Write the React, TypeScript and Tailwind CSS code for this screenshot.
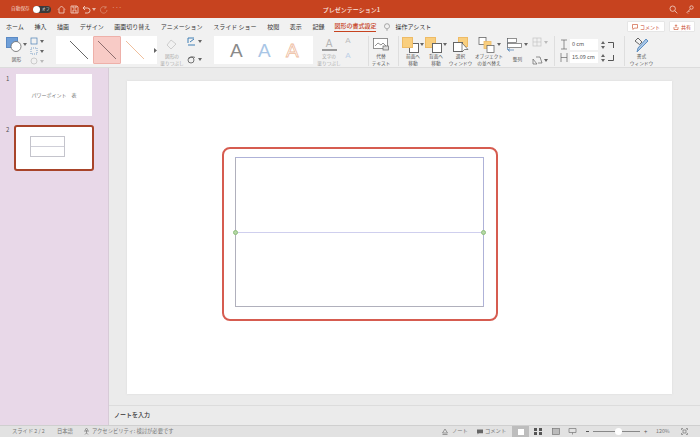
import {ReactNode} from 'react';

const font = {fontFamily: '"Noto Sans CJK JP", "Liberation Sans", sans-serif'};

const tabs = ['ホーム', '挿入', '描画', 'デザイン', '画面切り替え', 'アニメーション', 'スライド ショー', '校閲', '表示', '記録'];

function Caret({color = '#666'}: {color?: string}) {
  return (
    <svg width="4" height="3" viewBox="0 0 4 3" className="shrink-0">
      <path d="M0 0h4L2 3z" fill={color} />
    </svg>
  );
}

function Tool({icon, children, width, muted}: {icon: ReactNode; children: ReactNode; width: number; muted?: boolean}) {
  return (
    <div style={{width}} className="shrink-0 flex flex-col items-center">
      <div className="h-[17px] flex items-center justify-center gap-[1px]">{icon}</div>
      <div
        className={`h-[13px] flex items-center text-center text-[4.7px] leading-[6.5px] whitespace-nowrap ${muted ? 'text-[#a8a8a8]' : 'text-[#555]'}`}>
        <div>{children}</div>
      </div>
    </div>
  );
}

function Squares({back}: {back?: boolean}) {
  const yellow = <rect x="0.5" y="0.5" width="10" height="10" fill="#f9cf7f" stroke="#eebb66" />;
  const white = <rect x="7.5" y="6.5" width="9" height="9" fill="#fff" stroke="#666" />;
  return (
    <svg width="17" height="16" viewBox="0 0 17 16">
      {back ? yellow : white}
      {back ? white : yellow}
    </svg>
  );
}

function TitleBar() {
  return (
    <div className="h-[18px] bg-[#c7431f] flex items-center text-white shrink-0">
      <span className="ml-[11px] text-[4.7px] text-[#f4d6cb]">自動保存</span>
      <div className="ml-[3px] w-[18px] h-[7px] rounded-full bg-[#3a3a3a] flex items-center">
        <div className="w-[7px] h-[7px] rounded-full bg-white" />
        <span className="ml-[2px] text-[4px] text-[#ddd]">オフ</span>
      </div>
      <svg className="ml-[6px]" width="9" height="9" viewBox="0 0 9 9" fill="none" stroke="#f4d6cb" strokeWidth="0.8">
        <path d="M1 4.500 4.500 1 8 4.500M2 4v4h5V4" />
      </svg>
      <svg className="ml-[4px]" width="9" height="9" viewBox="0 0 9 9" fill="none" stroke="#f4d6cb" strokeWidth="0.8">
        <path d="M1 1h6l1 1v6H1zM3 1v2h3V1M3 8V5h3v3" />
      </svg>
      <svg className="ml-[3px]" width="9" height="9" viewBox="0 0 9 9" fill="none" stroke="#f4d6cb" strokeWidth="0.9">
        <path d="M1 3h4.500a2 2 0 0 1 0 5H3M1 3l2-2M1 3l2 2" />
      </svg>
      <div className="ml-[1px]">
        <Caret color="#e8b5a3" />
      </div>
      <svg className="ml-[3px]" width="9" height="9" viewBox="0 0 9 9" fill="none" stroke="#d98a70" strokeWidth="0.8">
        <path d="M7 2.500A3.300 3.300 0 1 0 8 5M7 1v2H5" />
      </svg>
      <span className="ml-[4px] w-[8px] text-[6px] leading-none text-[#f4d6cb] -mt-[2px]">···</span>
      <span className="ml-[203px] text-[6px] font-medium text-[#fbe9e2] whitespace-nowrap">プレゼンテーション1</span>
      <svg className="ml-auto" width="9" height="9" viewBox="0 0 9 9" fill="none" stroke="#f4d6cb" strokeWidth="0.8">
        <circle cx="3.700" cy="3.700" r="2.700" />
        <path d="M5.800 5.800 8.300 8.300" />
      </svg>
      <svg className="ml-[8px] mr-[6px]" width="8" height="9" viewBox="0 0 8 9" fill="none" stroke="#f4d6cb" strokeWidth="0.8">
        <circle cx="5.500" cy="2.500" r="1.700" />
        <path d="M4.300 4 1 7.500 2 8.500M2.500 6l1 1" />
      </svg>
    </div>
  );
}

function TabRow() {
  return (
    <div className="h-[17px] bg-[#f1f1f1] flex items-center shrink-0 text-[6px] text-[#333]">
      <div className="ml-[6px] flex gap-[10.6px] whitespace-nowrap">
        {tabs.map(name => (
          <span key={name}>{name}</span>
        ))}
      </div>
      <span className="ml-[10px] h-[11px] leading-[10px] text-[#c7431f] font-medium border-b border-[#c7431f] whitespace-nowrap">
        図形の書式設定
      </span>
      <svg className="ml-[8px]" width="6" height="8" viewBox="0 0 7 9" fill="none" stroke="#777" strokeWidth="0.7">
        <path d="M2.300 6.500C1 5.500.6 4.500.6 3.500a2.900 2.900 0 0 1 5.800 0c0 1-.4 2-1.700 3zM2.500 8h2" />
      </svg>
      <span className="ml-[5px] whitespace-nowrap">操作アシスト</span>
      <div className="ml-auto h-[11px] w-[38px] bg-white rounded-[1px] flex items-center justify-center gap-[2px] text-[5px] text-[#c7431f] border border-[#e6e6e6]">
        <svg width="6" height="6" viewBox="0 0 6 6" fill="none" stroke="#c7431f" strokeWidth="0.6">
          <path d="M.5.500h5v3.600H2.200L1 5.500V4.100H.5z" />
        </svg>
        コメント
      </div>
      <div className="ml-[4px] mr-[5px] h-[11px] w-[26px] bg-white rounded-[1px] flex items-center justify-center gap-[2px] text-[5px] text-[#c7431f] border border-[#e6e6e6]">
        <svg width="6" height="6" viewBox="0 0 6 6" fill="none" stroke="#c7431f" strokeWidth="0.6">
          <path d="M1 3v2.500h4V3M3 4V.8M1.800 2 3 .8 4.200 2" />
        </svg>
        共有
      </div>
    </div>
  );
}

function Line({color, selected}: {color: string; selected?: boolean}) {
  return (
    <div className={`w-[28px] h-[28px] shrink-0 flex items-center justify-center ${selected ? 'bg-[#f8cbc6] border border-[#eeb0a9] rounded-[1px]' : ''}`}>
      <svg width="20" height="20" viewBox="0 0 20 20" className="shrink-0">
        <path d="M1 1 19 19" stroke={color} strokeWidth="1" />
      </svg>
    </div>
  );
}

function BigA({color, outline, width}: {color: string; outline?: boolean; width: number}) {
  return (
    <span
      style={outline ? {width, WebkitTextStroke: `0.8px ${color}`, color: '#fff'} : {width, color}}
      className="shrink-0 text-[19px] leading-none font-['Liberation_Sans']">
      A
    </span>
  );
}

function Ribbon() {
  return (
    <div className="h-[33px] bg-[#f1f1f1] border-b border-[#dcdcdc] flex items-start shrink-0 pt-[1px]">
      <div className="ml-[5px]">
        <Tool
          width={23}
          icon={
            <>
              <svg width="16" height="15" viewBox="0 0 16 15">
                <rect x="0.500" y="0.500" width="11" height="10" fill="#6f9fd8" stroke="#5b8ac4" />
                <circle cx="10" cy="9.500" r="5" fill="#fff" stroke="#666" strokeWidth="0.8" />
              </svg>
              <Caret />
            </>
          }>
          図形
        </Tool>
      </div>
      <div className="ml-[2px] w-[16px] flex flex-col gap-[2px] pt-[1px] shrink-0">
        {['#4a7fb5', '#4a7fb5', '#bbb'].map((c, i) => (
          <div key={i} className="flex items-center gap-[2px]">
            <svg width="8" height="8" viewBox="0 0 8 8" fill="none" stroke={c} strokeWidth="0.7">
              {i === 2 ? <circle cx="4" cy="4" r="3" /> : <rect x="1" y="1" width="6" height="6" strokeDasharray={i === 1 ? '1 1' : undefined} />}
            </svg>
            <Caret color={i === 2 ? '#bbb' : '#666'} />
          </div>
        ))}
      </div>
      <div className="ml-[10px] w-[101px] h-[28px] bg-white flex items-center shrink-0">
        <div className="w-[9px] shrink-0" />
        <Line color="#666" />
        <Line color="#8d6d6d" selected />
        <Line color="#efbf9c" />
        <svg className="ml-[5px] shrink-0" width="3" height="5" viewBox="0 0 3 5">
          <path d="M0 0 3 2.500 0 5z" fill="#666" />
        </svg>
      </div>
      <div className="ml-[3px]">
        <Tool
          width={24}
          muted
          icon={
            <svg width="12" height="12" viewBox="0 0 12 12" fill="none" stroke="#c4c4c4" strokeWidth="0.8">
              <path d="M5 1 1 6l4 4 5-5z" />
            </svg>
          }>
          図形の
          <br />
          塗りつぶし
        </Tool>
      </div>
      <div className="ml-[3px] w-[20px] flex flex-col gap-[9px] pt-[1px] shrink-0">
        <div className="flex items-center gap-[2px]">
          <svg width="9" height="9" viewBox="0 0 9 9" fill="none" stroke="#3f7fb5" strokeWidth="1">
            <path d="M1 8h7M1 6V1h6M3 5l4-3" />
          </svg>
          <Caret />
        </div>
        <div className="flex items-center gap-[2px]">
          <svg width="9" height="9" viewBox="0 0 9 9" fill="none" stroke="#555" strokeWidth="0.8">
            <circle cx="4" cy="5" r="3" />
            <path d="M2 3.500c2-2 4-2 6-1" />
          </svg>
          <Caret />
        </div>
      </div>
      <div className="ml-[7px] w-[99px] h-[28px] bg-white flex items-center pl-[16px] shrink-0">
        <BigA color="#8a8a8a" width={28} />
        <BigA color="#a9c6e6" width={28} />
        <BigA color="#eebd9f" outline width={14} />
      </div>
      <div className="ml-[5px]">
        <Tool
          width={22}
          muted
          icon={
            <div className="flex flex-col items-center">
              <span className="text-[10px] leading-[10px] text-[#b5b5b5] font-['Liberation_Sans']">A</span>
              <div className="w-[15px] h-[2px] bg-[#9a9a9a]" />
            </div>
          }>
          文字の
          <br />
          塗りつぶし
        </Tool>
      </div>
      <div className="ml-[4px] w-[8px] flex flex-col items-center gap-[5px] text-[8px] leading-[10px] font-['Liberation_Sans'] shrink-0">
        <span className="text-[#bdbdbd]">A</span>
        <span className="text-[#bcd0e8]">A</span>
      </div>
      <div className="ml-[16px] w-px h-[30px] bg-[#dedede] shrink-0" />
      <div className="ml-[2px]">
        <Tool
          width={20}
          icon={
            <svg width="16" height="13" viewBox="0 0 16 13" fill="none" stroke="#666" strokeWidth="0.7">
              <rect x="0.500" y="0.500" width="14" height="10" fill="#fff" />
              <path d="M2 8l3-3 3 2 2-2 3 3" />
              <rect x="10" y="8" width="5.500" height="4" fill="#ddd" />
            </svg>
          }>
          代替
          <br />
          テキスト
        </Tool>
      </div>
      <div className="ml-[7px] w-px h-[30px] bg-[#dedede] shrink-0" />
      <div className="ml-[3px]">
        <Tool
          width={22}
          icon={
            <>
              <Squares />
              <Caret />
            </>
          }>
          前面へ
          <br />
          移動
        </Tool>
      </div>
      <Tool
        width={24}
        icon={
          <>
            <Squares back />
            <Caret />
          </>
        }>
        背面へ
        <br />
        移動
      </Tool>
      <Tool
        width={25}
        icon={
          <svg width="16" height="16" viewBox="0 0 16 16">
            <rect x="5.500" y="0.500" width="9" height="9" fill="#f9cf7f" stroke="#eebb66" />
            <rect x="0.500" y="5.500" width="9" height="9" fill="#fff" stroke="#666" />
            <path d="M9 6v9l2.500-2.500H15z" fill="#fff" stroke="#555" strokeWidth="0.7" />
          </svg>
        }>
        選択
        <br />
        ウィンドウ
      </Tool>
      <div className="ml-[1px]">
        <Tool
          width={30}
          icon={
            <>
              <svg width="18" height="16" viewBox="0 0 18 16">
                <rect x="1" y="0.500" width="7" height="7" fill="#fff" stroke="#666" strokeWidth="0.8" />
                <rect x="6" y="4.500" width="7" height="7" fill="#f9cf7f" stroke="#eebb66" strokeWidth="0.8" />
                <rect x="9" y="8.500" width="7" height="7" fill="#fff" stroke="#666" strokeWidth="0.8" />
              </svg>
              <Caret />
            </>
          }>
          オブジェクト
          <br />
          の並べ替え
        </Tool>
      </div>
      <div className="ml-[2px]">
        <Tool
          width={23}
          icon={
            <>
              <svg width="16" height="16" viewBox="0 0 16 16" fill="none" stroke="#666" strokeWidth="0.7">
                <path d="M.5 1v12" stroke="#4a7fb5" />
                <rect x="0.500" y="1.500" width="9" height="4" fill="#fff" />
                <rect x="0.500" y="6.500" width="14" height="4" fill="#fff" />
                <path d="M7 13H1M3 11.500 1 13l2 1.500" stroke="#4a7fb5" />
              </svg>
              <Caret />
            </>
          }>
          整列
        </Tool>
      </div>
      <div className="ml-[3px] w-[18px] flex flex-col gap-[8px] pt-[1px] shrink-0">
        <div className="flex items-center gap-[1px]">
          <svg width="11" height="10" viewBox="0 0 11 10" fill="none" stroke="#c4c4c4" strokeWidth="0.7">
            <rect x="1" y="1" width="8" height="8" />
            <path d="M5 1v8M1 5h8" />
          </svg>
          <Caret color="#bbb" />
        </div>
        <div className="flex items-center gap-[1px]">
          <svg width="11" height="10" viewBox="0 0 11 10" fill="none" stroke="#666" strokeWidth="0.7">
            <path d="M1 9V4l4 5zM4 2h4l2 6H6" />
          </svg>
          <Caret />
        </div>
      </div>
      <div className="ml-[4px] w-px h-[30px] bg-[#dedede] shrink-0" />
      <div className="ml-[5px] w-[56px] flex flex-col gap-[2px] pt-[3px] shrink-0">
        {[
          ['0 cm', 'M1 1h6M1 10h6M4 1v9'],
          ['15.09 cm', 'M1 1v9M7 1v9M1 5.500h6'],
        ].map(([value, d]) => (
          <div key={value} className="flex items-center h-[11px]">
            <svg className="shrink-0" width="8" height="11" viewBox="0 0 8 11" fill="none" stroke="#666" strokeWidth="0.7">
              <path d={d} />
            </svg>
            <div className="ml-[2px] w-[28px] h-[11px] bg-white text-[5.5px] leading-[11px] pl-[2px] text-[#555] whitespace-nowrap overflow-hidden">{value}</div>
            <svg className="ml-[3px] shrink-0" width="4" height="8" viewBox="0 0 4 8">
              <path d="M2 0 4 3H0zM2 8 0 5h4z" fill="#666" />
            </svg>
            <svg className="ml-[3px] shrink-0" width="6" height="6" viewBox="0 0 6 6" fill="none" stroke="#555" strokeWidth="1">
              <path d={value === '0 cm' ? 'M0 .5h5.500V6' : 'M0 5.500h5.500V0'} />
            </svg>
          </div>
        ))}
      </div>
      <div className="ml-[8px] w-px h-[30px] bg-[#dedede] shrink-0" />
      <div className="ml-[4px]">
        <Tool
          width={25}
          icon={
            <svg width="16" height="16" viewBox="0 0 16 16" fill="none" strokeWidth="1">
              <path d="M4 1 8 5 5.500 7.500 1 4z" stroke="#666" />
              <path d="M14 4 6 12l-3 3 1-4 8-9z" fill="#a9c6e6" stroke="#5f90c2" />
            </svg>
          }>
          書式
          <br />
          ウィンドウ
        </Tool>
      </div>
    </div>
  );
}

function Sidebar() {
  return (
    <div className="w-[109px] shrink-0 bg-[#e8d8e8] border-r border-[#d7cbd7] pt-[6px] text-[#555] text-[6px]">
      <div className="flex">
        <span className="ml-[6px] w-[10px]">1</span>
        <div className="w-[76px] h-[42px] bg-white flex items-center justify-center text-[5px] text-[#777] whitespace-pre">
          パワーポイント　表
        </div>
      </div>
      <div className="flex mt-[9px]">
        <span className="ml-[6px] w-[8px]">2</span>
        <div className="w-[80px] h-[46px] bg-white border-2 border-[#a8442a] rounded-[3px] pt-[9px] pl-[14px]">
          <div className="w-[35px] h-[21px] border border-[#c4c4cc] flex flex-col justify-center">
            <div className="h-px bg-[#cfcfd8]" />
          </div>
        </div>
      </div>
    </div>
  );
}

function Handle({className}: {className: string}) {
  return <div className={`absolute w-[5px] h-[5px] rounded-full bg-[#b5d8a5] border border-[#8fbf7d] ${className}`} />;
}

function Canvas() {
  return (
    <div className="flex-1 flex flex-col min-w-0 bg-[#ebebeb]">
      <div className="flex-1 pl-[18px] pt-[13px]">
        <div className="w-[545px] h-[313px] bg-white shadow-[0_0_2px_#d8d8d8] pl-[95px] pt-[66px]">
          <div className="w-[276px] h-[174px] border-2 border-[#d65c50] rounded-[8px] pl-[11px] pt-[8px]">
            <div className="relative w-[249px] h-[150px] border border-[#b0b0bc] border-t-[#aeb2d8] border-r-[#aeb2d8] flex flex-col justify-center">
              <div className="h-px bg-[#cfcfee]" />
              <Handle className="left-[-3px] top-[72px]" />
              <Handle className="right-[-3px] top-[72px]" />
            </div>
          </div>
        </div>
      </div>
      <div className="h-[20px] border-t border-[#dcdcdc] pl-[5px] text-[6px] leading-[17px] font-medium text-[#333] shrink-0">ノートを入力</div>
    </div>
  );
}

function StatusBar() {
  return (
    <div className="h-[12px] bg-[#e2e2e2] border-t border-[#cfcfcf] flex items-center text-[5.3px] text-[#777] shrink-0 whitespace-nowrap">
      <span className="ml-[12px] w-[35px]">スライド 2 / 2</span>
      <span className="ml-[10px] w-[15px]">日本語</span>
      <svg className="ml-[11px]" width="7" height="7" viewBox="0 0 7 7" fill="none" stroke="#777" strokeWidth="0.7">
        <circle cx="3.500" cy="1.500" r="1" />
        <path d="M1 3h5M3.500 3v2M2 6.500l1.500-1.500L5 6.500" />
      </svg>
      <span className="ml-[2px]">アクセシビリティ: 検討が必要です</span>
      <svg className="ml-auto" width="6" height="7" viewBox="0 0 6 7" fill="none" stroke="#777" strokeWidth="0.7">
        <path d="M3 1 .5 5h5zM.5 6.500h5" />
      </svg>
      <span className="ml-[4px] w-[15px]">ノート</span>
      <svg className="ml-[10px]" width="6" height="6" viewBox="0 0 7 6">
        <path d="M0 0h7v4.500H2L.8 6V4.500H0z" fill="#666" />
      </svg>
      <span className="ml-[2px] w-[20px]">コメント</span>
      <div className="ml-[7px] w-[17px] h-[11px] bg-[#bdbdbd] flex items-center justify-center">
        <div className="w-[6px] h-[6px] bg-white" />
      </div>
      <svg className="ml-[5px]" width="8" height="7" viewBox="0 0 8 7" fill="#555">
        <rect width="3" height="3" />
        <rect x="5" width="3" height="3" />
        <rect y="4" width="3" height="3" />
        <rect x="5" y="4" width="3" height="3" />
      </svg>
      <svg className="ml-[10px]" width="8" height="7" viewBox="0 0 8 7" fill="none" stroke="#777" strokeWidth="0.7">
        <rect x="0.500" y="0.500" width="7" height="6" fill="#bbb" />
      </svg>
      <svg className="ml-[8px]" width="9" height="7" viewBox="0 0 8 7" fill="none" stroke="#777" strokeWidth="0.7">
        <path d="M.5.500h7v4h-7zM4 4.500v2" />
      </svg>
      <div className="ml-[9px] w-[3px] h-px bg-[#555]" />
      <div className="ml-[4px] w-[47px] h-px bg-[#888] flex items-center">
        <div className="ml-[22px] w-[7px] h-[7px] rounded-full bg-white shrink-0" />
      </div>
      <span className="ml-[4px] w-[4px] text-[6px] leading-none text-[#555]">+</span>
      <span className="ml-[8px] w-[16px]">120%</span>
      <svg className="ml-[9px] mr-[12px]" width="7" height="7" viewBox="0 0 7 7" fill="none" stroke="#777" strokeWidth="0.7">
        <path d="M.5 2V.5H2M5 .5h1.500V2M6.500 5v1.500H5M2 6.500H.5V5" />
        <rect x="2" y="2" width="3" height="3" />
      </svg>
    </div>
  );
}

export default function App() {
  return (
    <div style={font} className="w-[700px] h-[437px] overflow-hidden flex flex-col bg-[#ebebeb]">
      <TitleBar />
      <TabRow />
      <Ribbon />
      <div className="flex-1 flex min-h-0">
        <Sidebar />
        <Canvas />
      </div>
      <StatusBar />
    </div>
  );
}
